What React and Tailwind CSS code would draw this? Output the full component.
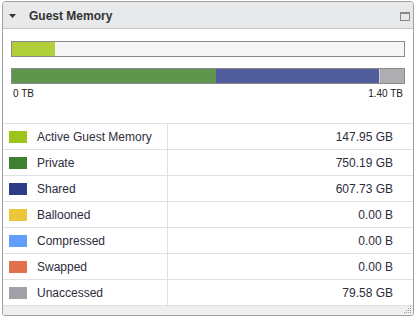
import React from 'react'

const rows = [
    { label: 'Active Guest Memory', value: '147.95 GB', color: 'bg-[#9dc41b]' },
    { label: 'Private', value: '750.19 GB', color: 'bg-[#3f7f31]' },
    { label: 'Shared', value: '607.73 GB', color: 'bg-[#2e3d87]' },
    { label: 'Ballooned', value: '0.00 B', color: 'bg-[#ecc73b]' },
    { label: 'Compressed', value: '0.00 B', color: 'bg-[#5f9efa]' },
    { label: 'Swapped', value: '0.00 B', color: 'bg-[#e2704b]' },
    { label: 'Unaccessed', value: '79.58 GB', color: 'bg-[#a1a1a8]' },
]

const App = () => {
    return (
        <div className='w-[418px] h-[321px] bg-white pt-[1px] pl-[2px]' style={{ fontFamily: '"Liberation Sans", Arial, sans-serif' }}>
            <div className='w-[412px] border border-[#a0a0a0] rounded-t-[4px] rounded-b-[3px] overflow-hidden'>
                {/* header */}
                <div className='h-[27px] flex items-center bg-[#e8e9ea] border-b border-[#c4c4c4] pt-[2px]'>
                    <svg width="7" height="5" viewBox="0 0 7 5" className='ml-[6px]'>
                        <polygon points="0,0 7,0 3.5,4" fill="#333" />
                    </svg>
                    <span className='ml-[13px] text-[12px] font-bold text-[#333]'>Guest Memory</span>
                    <div className='ml-auto mr-[3px] w-[10px] h-[9px] border border-[#888] border-t-2 mt-[1px]'></div>
                </div>

                {/* bars */}
                <div className='px-[8px] pt-[12px]'>
                    <div className='h-[16px] border border-[#8a8a8a] bg-[#f6f6f6] flex'>
                        <div className='w-[43px] bg-[#b1cf3b]'></div>
                    </div>
                    <div className='mt-[11px] h-[16px] border border-[#8a8a8a] flex'>
                        <div className='w-[204px] bg-[#5f964d]'></div>
                        <div className='w-[164px] bg-[#515e9b] border-r border-[#d0d0d8]'></div>
                        <div className='flex-1 bg-[#adadb2]'></div>
                    </div>
                    <div className='flex justify-between text-[10px] text-[#222] leading-none mt-[5px] px-[2px]'>
                        <span>0 TB</span>
                        <span>1.40 TB</span>
                    </div>
                </div>

                {/* table */}
                <div className='mt-[24px]'>
                    {rows.map((row) => (
                        <div key={row.label} className='h-[26px] flex border-t border-[#e0e0e0] text-[12px] text-[#2c2c3c]'>
                            <div className='w-[165px] flex items-center border-r border-[#e0e0e0]'>
                                <div className={`ml-[6px] w-[18px] h-[12px] ${row.color}`}></div>
                                <span className='ml-[10px]'>{row.label}</span>
                            </div>
                            <div className='flex-1 flex items-center justify-end pr-[20px]'>{row.value}</div>
                        </div>
                    ))}
                    <div className='h-[10px] border-t border-[#e0e0e0] bg-[#efefef] flex justify-end items-end'>
                        <svg width="8" height="8" viewBox="0 0 8 8" className='mr-[1px] mb-[1px]'>
                            <rect x="6" y="0" width="1" height="1" fill="#999" />
                            <rect x="4" y="2" width="1" height="1" fill="#999" />
                            <rect x="6" y="2" width="1" height="1" fill="#999" />
                            <rect x="2" y="4" width="1" height="1" fill="#999" />
                            <rect x="4" y="4" width="1" height="1" fill="#999" />
                            <rect x="6" y="4" width="1" height="1" fill="#999" />
                            <rect x="0" y="6" width="1" height="1" fill="#999" />
                            <rect x="2" y="6" width="1" height="1" fill="#999" />
                            <rect x="4" y="6" width="1" height="1" fill="#999" />
                            <rect x="6" y="6" width="1" height="1" fill="#999" />
                        </svg>
                    </div>
                </div>
            </div>
        </div>
    )
}

export default App
